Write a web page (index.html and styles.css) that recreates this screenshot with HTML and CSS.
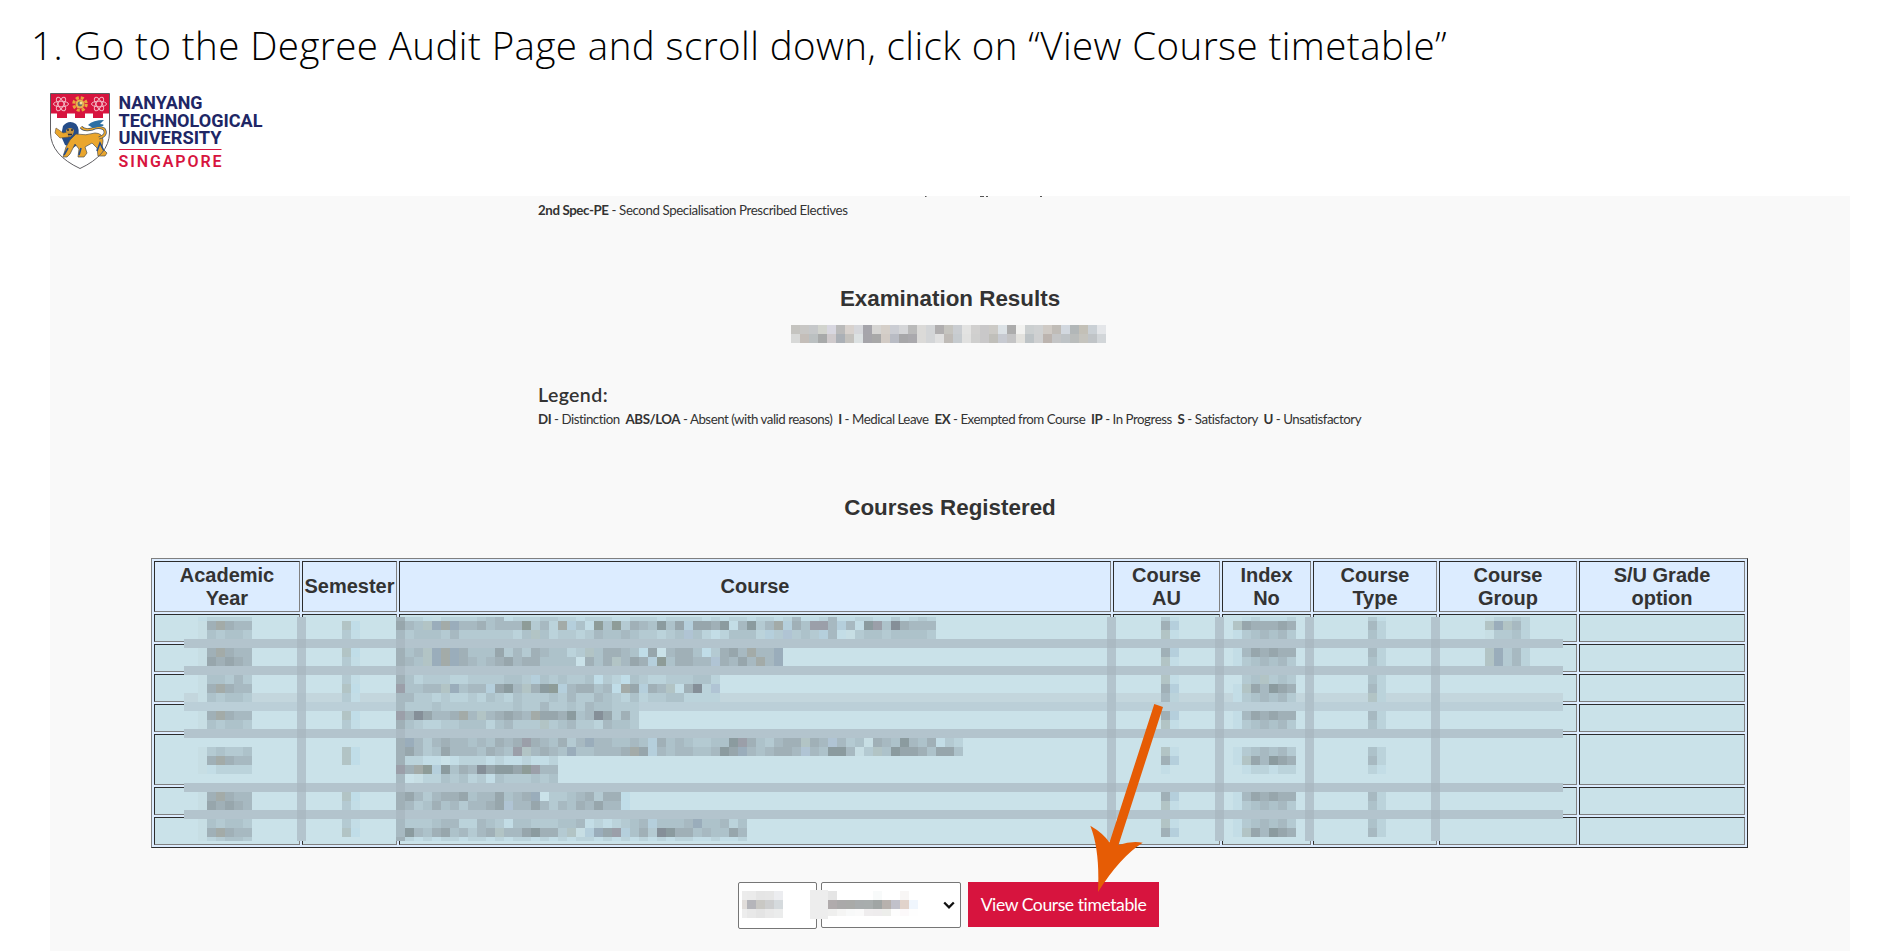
FILE: index.html
```html
<!DOCTYPE html>
<html lang="en">
<head>
<meta charset="utf-8">
<title>Degree Audit</title>
<link rel="stylesheet" href="styles.css">
</head>
<body>
<h1 class="title"><span class="fit" data-w="1416">1. Go to the Degree Audit Page and scroll down, click on “View Course timetable”</span></h1>
<svg class="logo" width="216" height="80" viewBox="0 0 216 80">
  <path d="M.5 .5H59.500V40Q59 62 30 75.500Q1 62 .5 40Z" fill="#fff"/>
  <path d="M.5 .5H59.500V20.500H53V25H43V20.500H35V25H25V20.500H17V25H7V20.500H.5Z" fill="#d7143e"/>
  <g fill="none" stroke="#f3b7c3" stroke-width="1">
    <ellipse cx="11" cy="11" rx="7.500" ry="2.800"/><ellipse cx="11" cy="11" rx="7.500" ry="2.800" transform="rotate(60 11 11)"/><ellipse cx="11" cy="11" rx="7.500" ry="2.800" transform="rotate(120 11 11)"/>
    <ellipse cx="49" cy="11" rx="7.500" ry="2.800"/><ellipse cx="49" cy="11" rx="7.500" ry="2.800" transform="rotate(60 49 11)"/><ellipse cx="49" cy="11" rx="7.500" ry="2.800" transform="rotate(120 49 11)"/>
  </g>
  <circle cx="30" cy="11" r="6.300" fill="none" stroke="#e9a63c" stroke-width="3" stroke-dasharray="3 1.950"/>
  <circle cx="30" cy="11" r="4.500" fill="#e9b24d"/><circle cx="30" cy="11" r="2.400" fill="#6a6a69"/><circle cx="31" cy="10" r="1.500" fill="#f5df95"/>
  <path d="M13 33Q19 26 26 31Q30 36 28 43L30 50L23 55L15 52L11 43Z" fill="#254c88"/>
  <path d="M26 41Q36 43 45 40Q53 40 53 48L52 55L57 60L55 63H48L47 55L42 50L35 54L37 60L34 64H28L29 56L25 51L20 61L17 64H13L16 54L20 47Z" fill="#eaa62d" stroke="#52514c" stroke-width=".7"/>
  <path d="M19 44L10 45L5 40L6 35L9 37L13 40L18 39Z" fill="#eaa62d" stroke="#665442" stroke-width=".6"/>
  <path d="M16 37Q20 33 24 37Q24 42 20 44Q16 42 16 37" fill="#c9953b"/><path d="M17 37h2m2 0h2M18 41.500h4" stroke="#292c3f" stroke-width="1.400"/>
  <path d="M49 45Q58 42 54 36Q49 33 42 36Q34 38 31 34" fill="none" stroke="#3d5269" stroke-width="3"/><path d="M49 45Q58 42 54 36Q49 33 42 36Q34 38 31 34" fill="none" stroke="#eaa62d" stroke-width="1.600"/>
  <path d="M38 32Q43 27 54 27L50 31Q55 31 53 33L43 35Z" fill="#2d70a4"/>
  <path d="M47 58L50 50L54 58M29 62L31 55M14 62L18 55" fill="none" stroke="#254c88" stroke-width="1.600"/>
  <path d="M.5 .5H59.500V40Q59 62 30 75.500Q1 62 .5 40Z" fill="none" stroke="#5f5e62" stroke-width="1"/>
  <g class="logo-name">
    <text x="68.500" y="16.200" textLength="84" lengthAdjust="spacingAndGlyphs">NANYANG</text>
    <text x="68.500" y="33.500" textLength="144" lengthAdjust="spacingAndGlyphs">TECHNOLOGICAL</text>
    <text x="68.500" y="51" textLength="103" lengthAdjust="spacingAndGlyphs">UNIVERSITY</text>
    <text class="logo-country" x="68.500" y="73.500" textLength="103">SINGAPORE</text>
  </g>
  <path d="M69 56.500H171.500" stroke="#d7143e"/>
</svg>
<main class="panel">
  <p class="note"><span class="fit" data-w="310"><b>2nd Spec-PE</b> - Second Specialisation Prescribed Electives</span></p>
  <h2 class="exam">Examination Results</h2>
  <h3 class="legend-title"><span class="fit" data-w="70">Legend:</span></h3>
  <p class="note legend"><span class="fit" data-w="824"><b>DI</b> - Distinction&nbsp; <b>ABS/LOA</b> - Absent (with valid reasons)&nbsp; <b>I</b> - Medical Leave&nbsp; <b>EX</b> - Exempted from Course&nbsp; <b>IP</b> - In Progress&nbsp; <b>S</b> - Satisfactory&nbsp; <b>U</b> - Unsatisfactory</span></p>
  <h2 class="registered">Courses Registered</h2>
  <table class="courses">
    <colgroup><col class="c1"><col class="c2"><col class="c3"><col class="c4"><col class="c5"><col class="c6"><col class="c7"><col class="c8"></colgroup>
    <tr class="head"><th>Academic<br>Year</th><th>Semester</th><th>Course</th><th>Course<br>AU</th><th>Index<br>No</th><th>Course<br>Type</th><th>Course<br>Group</th><th>S/U Grade<br>option</th></tr>
    <tr><td></td><td></td><td></td><td></td><td></td><td></td><td></td><td></td></tr>
    <tr><td></td><td></td><td></td><td></td><td></td><td></td><td></td><td></td></tr>
    <tr><td></td><td></td><td></td><td></td><td></td><td></td><td></td><td></td></tr>
    <tr><td></td><td></td><td></td><td></td><td></td><td></td><td></td><td></td></tr>
    <tr class="tall"><td></td><td></td><td></td><td></td><td></td><td></td><td></td><td></td></tr>
    <tr><td></td><td></td><td></td><td></td><td></td><td></td><td></td><td></td></tr>
    <tr><td></td><td></td><td></td><td></td><td></td><td></td><td></td><td></td></tr>
  </table>
  <div class="controls">
    <div class="field year"></div>
    <div class="field term"><svg width="12" height="9" viewBox="0 0 12 9"><path d="M1.200 1.500L6 6.300L10.800 1.500" fill="none" stroke="#111" stroke-width="2.300"/></svg></div>
    <button class="view"><span class="fit" data-w="166">View Course timetable</span></button>
  </div>
</main>
<svg class="overlay" id="overlay" width="1892" height="951" viewBox="0 0 1892 951">
  <g id="mosaic" shape-rendering="crispEdges"></g>
  <path d="M925 196h1.500v1h-1.500zM980 196h4v1h-4zM986 196h2v1h-2zM1040 196h2v1h-2z" fill="#555"/>
  <path d="M1154.300 704L1163 707L1118.500 845Q1132 840.500 1142.700 842.700Q1120 857 1098 892Q1100 850 1090.300 825.700Q1103 833 1109.500 842.500Z" fill="#e65c05"/>
</svg>
<script src="script.js"></script>
</body>
</html>
```

FILE: styles.css
```css
* { box-sizing: border-box; }
body { margin: 0; width: 1892px; height: 951px; overflow: hidden; position: relative; background: #fff; color: #333; font-family: Lato, "Liberation Sans", sans-serif; }
h1, h2, h3, p { margin: 0; font-weight: 400; white-space: nowrap; }
.title { height: 93px; padding: 17px 0 0 31px; font: 350 38.500px/56px "Open Sans", "Noto Sans", sans-serif; color: #000; }
.logo { display: block; margin-left: 50px; }
.logo-name { font: 700 17.500px Roboto, sans-serif; fill: #202665; }
.logo-country { font-size: 16px; font-weight: 600; fill: #d7143e; }
.panel { width: 1800px; height: 755px; margin: 23px 0 0 50px; background: #f9f9f9; display: flex; flex-direction: column; }
.note { padding-left: 488px; margin-top: 5px; font-size: 13.300px; line-height: 18px; }
.exam, .registered { font: 700 22.400px/26px "Liberation Sans", sans-serif; text-align: center; }
.exam { margin-top: 67px; }
.legend-title { margin-top: 71px; padding-left: 488px; font-size: 19.500px; line-height: 24px; font-weight: 600; }
.legend { margin-top: 3px; }
.registered { margin-top: 67px; }
.courses { width: 1597px; height: 290px; margin: 37px 0 0 101px; table-layout: fixed; border-collapse: separate; border-spacing: 2px; border: 1px solid; border-color: #808080 #2c2c2c #2c2c2c #808080; background: #dcecff; }
.courses th, .courses td { padding: 0; border: 1px solid; border-color: #2c2c2c #808080 #808080 #2c2c2c; }
.courses td { height: 28px; background: #cae2e9; }
.courses th { height: 51px; font: 700 20px/23px "Liberation Sans", sans-serif; white-space: nowrap; }
.courses .tall td { height: 51px; }
.c1 { width: 146px; } .c2 { width: 95px; } .c3 { width: 712px; } .c4 { width: 107px; }
.c5 { width: 89px; } .c6 { width: 124px; } .c7 { width: 138px; } .c8 { width: 166px; }
.controls { display: flex; align-items: flex-start; margin: 34px 0 0 688px; }
.field { border: 1px solid #767676; border-radius: 2px; background: #fff; }
.year { width: 79px; height: 47px; }
.term { width: 140px; height: 46px; margin-left: 4px; display: flex; align-items: center; justify-content: flex-end; padding-right: 5px; }
.view { width: 191px; height: 45px; margin-left: 7px; padding: 0; border: 0; background: #d7143e; color: #fff; font: 400 17.600px/20px Lato, sans-serif; white-space: nowrap; }
.overlay { position: absolute; left: 0; top: 0; pointer-events: none; }
```

FILE: script.js
```js
const palette = {
  a: '#c3dde6', b: '#bbd3db', c: '#b4cad2', d: '#adc2ca', e: '#a7b9c1', f: '#a0b0b7', g: '#97a6ac',
  h: '#8b9b9f', i: '#858f98', t: '#a3aba8', u: '#b2c4c5', v: '#8e9c98', w: '#9aadbb', x: '#9b9fa9',
  y: '#b5cfdc', z: '#b0c4d4', o: '#cae2e9', l: '#c7dee4', m: '#c0dde8'
};
const mosaic = document.getElementById('mosaic');
function rect(x, y, w, h, fill) {
  const r = document.createElementNS('http://www.w3.org/2000/svg', 'rect');
  const a = { x, y, width: w, height: h, fill };
  for (const k in a) r.setAttribute(k, a[k]);
  mosaic.appendChild(r);
}
function cells(x, y, row, h) {
  [...row].forEach((k, i) => { if (palette[k]) rect(x + i * 9, y, 9, h || 9, palette[k]); });
}
// bands over the cell borders
const columns = [297, 396, 1107, 1215, 1305, 1431];
const lines = [639, 666, 729, 783, 810];
columns.forEach(x => rect(x, 617, 9, 224, '#b3c4cd'));
lines.forEach(y => rect(184, y, 1379, 9, '#b3c4cd'));
rect(184, 693, 1379, 9, '#c3d6dd');
rect(184, 702, 1379, 9, '#bbcfd8');
columns.forEach(x => {
  lines.forEach(y => rect(x, y, 9, 9, '#abbac3'));
  rect(x, 693, 9, 18, '#b0c1ca');
});

// course names
cells(396, 617, 'fbbalbbbbcdeabbbccbbabbbaabbbabbbbababbabbabeaabeaabbaacabcb', 4);
cells(396, 621, 'geduwtweefdeeevcebtydavdvcfedhdgyggfhaehcetyfdxxeyeahxdifeee');
cells(396, 630, 'ecdddceccccccbdudbccbceddedccbcdzdbabdddbyczcdcyealcddcddddc');
cells(396, 648, 'fdeuwtwfdddgcecfeddbcudffedmgoeffdmcfgeteew');
cells(396, 657, 'feduwtwfedefgeffddddofdfuegfyvdffeezfegetew');
cells(396, 675, 'fdbcccbbccccddcydcdccdmcbmdcbbcccddb');
cells(396, 684, 'xddeeuwdeeygheufhvyeffdemtgyfeuafibz');
cells(396, 693, 'eeccbcbbcbdcbdcccdceccedcbdbccddbbbb');
cells(396, 702, 'ecccdccccccccdcceccdceddccc');
cells(396, 711, 'xfigeefteuefgfetggfhdeigcfc');
cells(396, 720, 'fdcbbccdddbdecccucdeccbeddc');
cells(396, 738, 'fwecefeededfefxfedfceweeddedyfdedccddhxfdceffufezecdlfedhedfa');
cells(405 + 540, 738, 'cb');
cells(396, 747, 'fgecdgeeedfedxuefedwddeeeftgyedeeddehgwedeffezedhhelcudhggfdg');
cells(405 + 540, 747, 'gd');
cells(396, 756, 'fbbaaoabbbabaabaab');
cells(396, 765, 'xftvyhdfeighhgvxee');
cells(396, 774, 'eolbbdcdbcadcccdcd');
cells(396, 792, 'fgeceffgdeegdefwoccdefcffm');
cells(396, 801, 'fecdfdeceefgzeegecedfegeem');
cells(396, 819, 'ecccdeebbedcaddcccddeababcdeydddewddebd');
cells(396, 828, 'ehedfgdecefueeghffculywgxydfcihffdeddge');
cells(396, 837, 'fbababbabbababbabababbabababababbaabaab', 4);

// short values in the narrow columns
[621, 648, 684, 711, 756, 792, 828].forEach((y, n) => {
  const tall = n === 1 || n === 5;
  const next = n === 4 ? 747 : n === 6 ? 819 : y + 9;
  cells(198, y, 'lftfee');
  cells(198, next, n === 4 ? 'lcdccd' : tall ? 'lgfgfe' : 'ldcddc');
  cells(342, y, 'um');
  cells(342, next, n === 4 ? 'um' : 'ca');
  cells(1161, y, 'fy');
  cells(1161, next, 'ua');
  cells(1233, y, n === 0 ? 'ugfffgf' : n % 2 ? 'aegfgff' : 'augehgf');
  cells(1233, next, 'acdedec');
  cells(1368, y, 'eb');
  cells(1368, next, 'db');
});
cells(198, 675, 'lddcec'); cells(198, 617, 'abbbbb', 4); cells(198, 765, 'labbbb'); cells(198, 837, 'lbcddc', 4);
cells(1161, 675, 'ua'); cells(1161, 693, 'eb'); cells(1161, 617, 'ca', 4); cells(1161, 765, 'ao');
cells(1233, 675, 'ocducdc'); cells(1233, 617, 'oabaaab', 4); cells(1233, 765, 'oabbabb');
cells(1368, 675, 'db'); cells(1368, 693, 'ub'); cells(1368, 617, 'ca', 4); cells(1368, 765, 'ba');
cells(342, 675, 'ca');
cells(1485, 617, 'lbbcb', 4); cells(1485, 621, 'uwueb'); cells(1485, 630, 'lccdb');
cells(1485, 648, 'uwceb'); cells(1485, 657, 'uwceb');

// result notice
const top1 = 'c5c4c0 c8c7c5 c6c8ca d2d4ce d8d7e0 bababa d8d2ce d6d7db a6a5ab d6d5d3 d5cfc9 cbcdd3 d5d6d8 bababa dbdad8 d3d5d7 b0aeaf c5c4bf cacdd1 e3e3e2 d1d0cf c9c8c9 cccac6 dce2e6 acacac f2f2f0 cbcfd0 cfd1d2 cfcac5 c0bcb7 d2d8df b2b7b8 c3c0b7 cad0d5 e4e6e9';
const top2 = 'd8d9d8 c4beb9 bbc0c1 a8aaaa cfcacc abb0b6 c4c2be dce1e2 a6a5aa a8a8a8 d2cbc5 b9bcc4 a7a7a9 aaa9ad dbdad8 d3d5d7 e0e0e0 bfbbb7 c6cbcf e1e1e0 cfcfce c9c8c9 c0bfba c7cad1 c4c4c5 e3e2de bdc3c6 cfd0d1 bcb4af c4c5c6 bec3c6 babdbc c5c4be c0c4c7 d2d6d9';
[top1, top2].forEach((s, r) => s.split(' ').forEach((c, i) => rect(791 + i * 9, 325 + r * 9, 9, 9, '#' + c)));

// values in the form fields
[['ececec', 'ebebeb', 'e5e5e5', 'e6e6e6', 'ecedf0'], ['e1ddda', 'b5b5ba', 'c9c8c4', 'cdcecf', 'd5dadd'], ['ededed', 'e8e8e8', 'e4e4e4', 'e9e9e9', 'ebecec']]
  .forEach((row, r) => row.forEach((c, i) => rect(i ? 747 + (i - 1) * 9 : 742, 891 + r * 9, i ? 9 : 5, 9, '#' + c)));
rect(810, 890, 18, 29, '#ededed');
rect(828, 891, 9, 9, '#e5e5e5'); rect(873, 891, 9, 9, '#f8fafa'); rect(900, 891, 9, 9, '#f8f6f5');
'b0abac aaa9a9 a9aaa8 a8acad a8adad a0a5a4 b7b1ad c1c1ca e1d3cb f0f6fd'.split(' ').forEach((c, i) => rect(828 + i * 9, 900, 9, 9, '#' + c));
'efefee f5f5f4 f8f9f9 fafafa efedee eeeced edeeeb fdfdfd fcf9fa fefefe'.split(' ').forEach((c, i) => rect(828 + i * 9, 909, 9, 7, '#' + c));

// keep each line at its set measure
document.querySelectorAll('.fit').forEach(el => {
  const w = el.getBoundingClientRect().width;
  el.style.letterSpacing = (Number(el.dataset.w) - w) / el.textContent.length + 'px';
});
```
